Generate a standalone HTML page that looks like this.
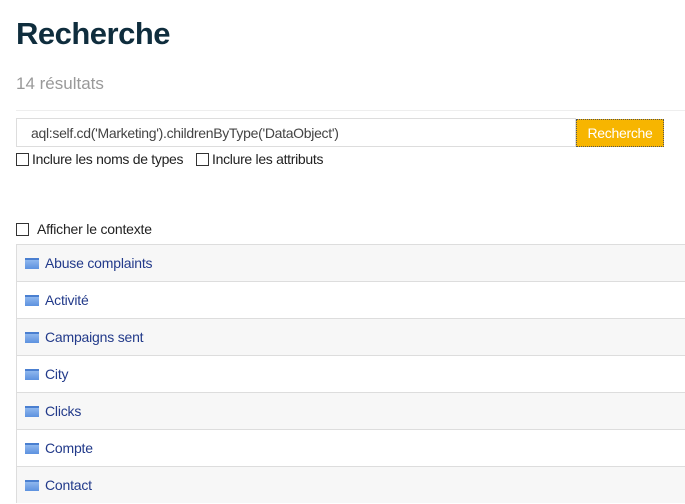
<!DOCTYPE html><html><head><style>
body{margin:0;background:#fff;font-family:"Liberation Sans",sans-serif;width:685px;height:499px;overflow:hidden;position:relative}
h1{position:absolute;left:16px;top:16px;margin:0;font-size:31px;font-weight:bold;color:#0f2d3d;letter-spacing:-0.5px}
.cnt{position:absolute;left:16px;top:74px;font-size:17px;color:#999}
.hr{position:absolute;left:16px;right:0;top:110px;border-top:1px solid #eee}
.inp{position:absolute;left:16px;top:118px;width:560px;height:29px;border:1px solid #ddd;box-sizing:border-box;font-size:14px;color:#444;padding:6px 0 0 14px;letter-spacing:-0.3px}
.btn{position:absolute;left:576px;top:119px;width:88px;height:28px;background:#f7b500;border:1px dotted #555;box-sizing:border-box;color:#fff;font-size:14px;text-align:center;line-height:26px;letter-spacing:-0.3px}
.cb{display:inline-block;width:11px;height:11px;border:1px solid #333;vertical-align:-2px;margin-right:3px}
.opt{position:absolute;top:151px;font-size:14px;color:#222;letter-spacing:-0.3px}
.ctx{position:absolute;left:16px;top:221px;font-size:14px;color:#222;letter-spacing:-0.2px}
.list{position:absolute;left:16px;top:244px;right:0;border-left:1px solid #ddd}
.row{height:36px;border-top:1px solid #ddd;font-size:14px;color:#223a8a;line-height:37px;padding-left:8px;letter-spacing:-0.2px}
.row:nth-child(odd){background:#f7f7f7}
.ic{display:inline-block;width:14px;height:9px;background:linear-gradient(#8fb7ee,#5d92df);border-top:2px solid #4a7fd0;vertical-align:-1px;margin-right:6px}
</style></head><body>
<h1>Recherche</h1>
<div class="cnt">14 résultats</div>
<div class="hr"></div>
<div class="inp">aql:self.cd('Marketing').childrenByType('DataObject')</div>
<div class="btn">Recherche</div>
<div class="opt" style="left:16px"><span class="cb"></span>Inclure les noms de types</div>
<div class="opt" style="left:196px"><span class="cb"></span>Inclure les attributs</div>
<div class="ctx"><span class="cb" style="margin-right:8px"></span>Afficher le contexte</div>
<div class="list">
<div class="row"><span class="ic"></span>Abuse complaints</div>
<div class="row"><span class="ic"></span>Activité</div>
<div class="row"><span class="ic"></span>Campaigns sent</div>
<div class="row"><span class="ic"></span>City</div>
<div class="row"><span class="ic"></span>Clicks</div>
<div class="row"><span class="ic"></span>Compte</div>
<div class="row"><span class="ic"></span>Contact</div>
</div>
</body></html>
